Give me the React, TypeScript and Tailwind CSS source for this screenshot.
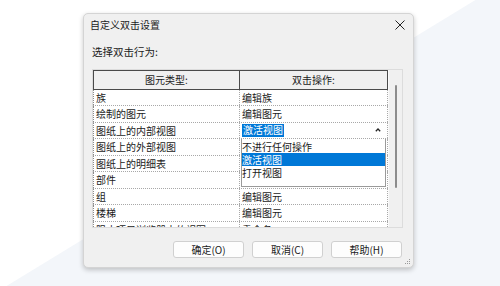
import React from "react";

const font = { fontFamily: '"Noto Sans CJK SC", "Noto Sans", sans-serif' };

const rows: [string, string][] = [
  ["族", "编辑族"],
  ["绘制的图元", "编辑图元"],
  ["图纸上的内部视图", ""],
  ["图纸上的外部视图", ""],
  ["图纸上的明细表", ""],
  ["部件", ""],
  ["组", "编辑图元"],
  ["楼梯", "编辑图元"],
  ["阻止项目浏览器中的视图", "重命名"],
];

export default function App() {
  return (
    <div
      className="relative w-[500px] h-[286px] overflow-hidden bg-white text-[#1b1b1b] text-[10px]"
      style={font}
    >
      <svg className="absolute inset-0" width="500" height="286">
        <polygon points="0,290 500,-15 500,286 0,286" fill="#f3f6fa" />
      </svg>

      <div className="relative ml-[83px] mt-[13px] w-[331px] h-[255px] bg-[#f0f0f0] rounded-[5px] border border-[#d4d4d4] shadow-[0_2px_5px_rgba(0,0,0,0.22)] flex flex-col">
        {/* title */}
        <div className="h-[21px] flex items-center justify-between pl-[6px] pr-[8px]">
          <span className="leading-none">自定义双击设置</span>
          <svg width="10" height="10" viewBox="0 0 10 10">
            <path d="M0.5 0.5 L9.5 9.5 M9.5 0.5 L0.5 9.5" stroke="#222" strokeWidth="1" />
          </svg>
        </div>

        <div className="mt-[10px] h-[14px] pl-[8px] flex items-center text-[10.5px]">
          <span className="leading-none">选择双击行为:</span>
        </div>

        {/* table box */}
        <div className="mt-[10px] ml-[8px] w-[311px] h-[159px] border border-[#dcdcdc] bg-[#f0f0f0] flex overflow-hidden">
          <div className="relative w-[295px] flex flex-col">
            {/* header */}
            <div className="flex h-[19.5px] shrink-0 border-t border-b-[1.5px] border-[#4a4a4a] bg-[#f0f0f0]">
              <div className="w-[147px] flex items-center justify-center border-l border-r border-[#4a4a4a]">
                图元类型:
              </div>
              <div className="flex-1 flex items-center justify-center border-r border-[#4a4a4a]">
                双击操作:
              </div>
            </div>
            {rows.map(([a, b], i) => (
              <div
                key={i}
                className="flex h-[16.5px] shrink-0 bg-white border-b border-dotted border-[#a8a8a8]"
              >
                <div className="w-[147px] flex items-center pl-[2px] border-l border-[#8a8a8a] border-r border-r-[#a8a8a8] border-dotted whitespace-nowrap overflow-hidden">
                  {a}
                </div>
                <div className="flex-1 flex items-center pl-[2px] border-r border-dotted border-[#a8a8a8] whitespace-nowrap overflow-hidden">
                  {i === 2 ? (
                    <div className="flex-1 flex items-center justify-between pr-[6px]">
                      <span className="bg-[#0078d7] text-white leading-[12.5px] px-[1px]">激活视图</span>
                      <svg width="6" height="4" viewBox="0 0 6 4">
                        <path d="M0.8 3.2 L3 1 L5.2 3.2" stroke="#222" strokeWidth="1.3" fill="none" />
                      </svg>
                    </div>
                  ) : (
                    b
                  )}
                </div>
              </div>
            ))}

            {/* dropdown list */}
            <div className="absolute left-[148px] top-[69px] w-[145px] h-[48px] bg-white border border-t-0 border-[#9a9a9a] flex flex-col pt-[1px] leading-[13px]">
              <div className="h-[13px] flex items-center whitespace-nowrap">不进行任何操作</div>
              <div className="h-[13px] flex items-center bg-[#0078d7] text-white whitespace-nowrap">激活视图</div>
              <div className="h-[13px] flex items-center whitespace-nowrap">打开视图</div>
            </div>
          </div>

          {/* scroll area */}
          <div className="flex-1 flex justify-center pt-[15px] border-l border-[#fafafa]">
            <div className="w-[2px] h-[103px] bg-[#8c8c8c] rounded-full" />
          </div>
        </div>

        {/* buttons */}
        <div className="mt-[13px] flex justify-end gap-[8px] pr-[11px]">
          {["确定(O)", "取消(C)", "帮助(H)"].map((t) => (
            <div
              key={t}
              className="w-[71px] h-[17px] flex items-center justify-center rounded-[3px] border border-[#d0d0d0] bg-[#fdfdfd]"
            >
              {t}
            </div>
          ))}
        </div>

        {/* resize grip */}
        <svg className="absolute right-[2px] bottom-[2px]" width="7" height="7" viewBox="0 0 7 7">
          <rect x="5" y="1" width="1" height="1" fill="#9a9a9a" />
          <rect x="3" y="3" width="1" height="1" fill="#9a9a9a" />
          <rect x="5" y="3" width="1" height="1" fill="#9a9a9a" />
          <rect x="1" y="5" width="1" height="1" fill="#9a9a9a" />
          <rect x="3" y="5" width="1" height="1" fill="#9a9a9a" />
          <rect x="5" y="5" width="1" height="1" fill="#9a9a9a" />
        </svg>
      </div>
    </div>
  );
}
